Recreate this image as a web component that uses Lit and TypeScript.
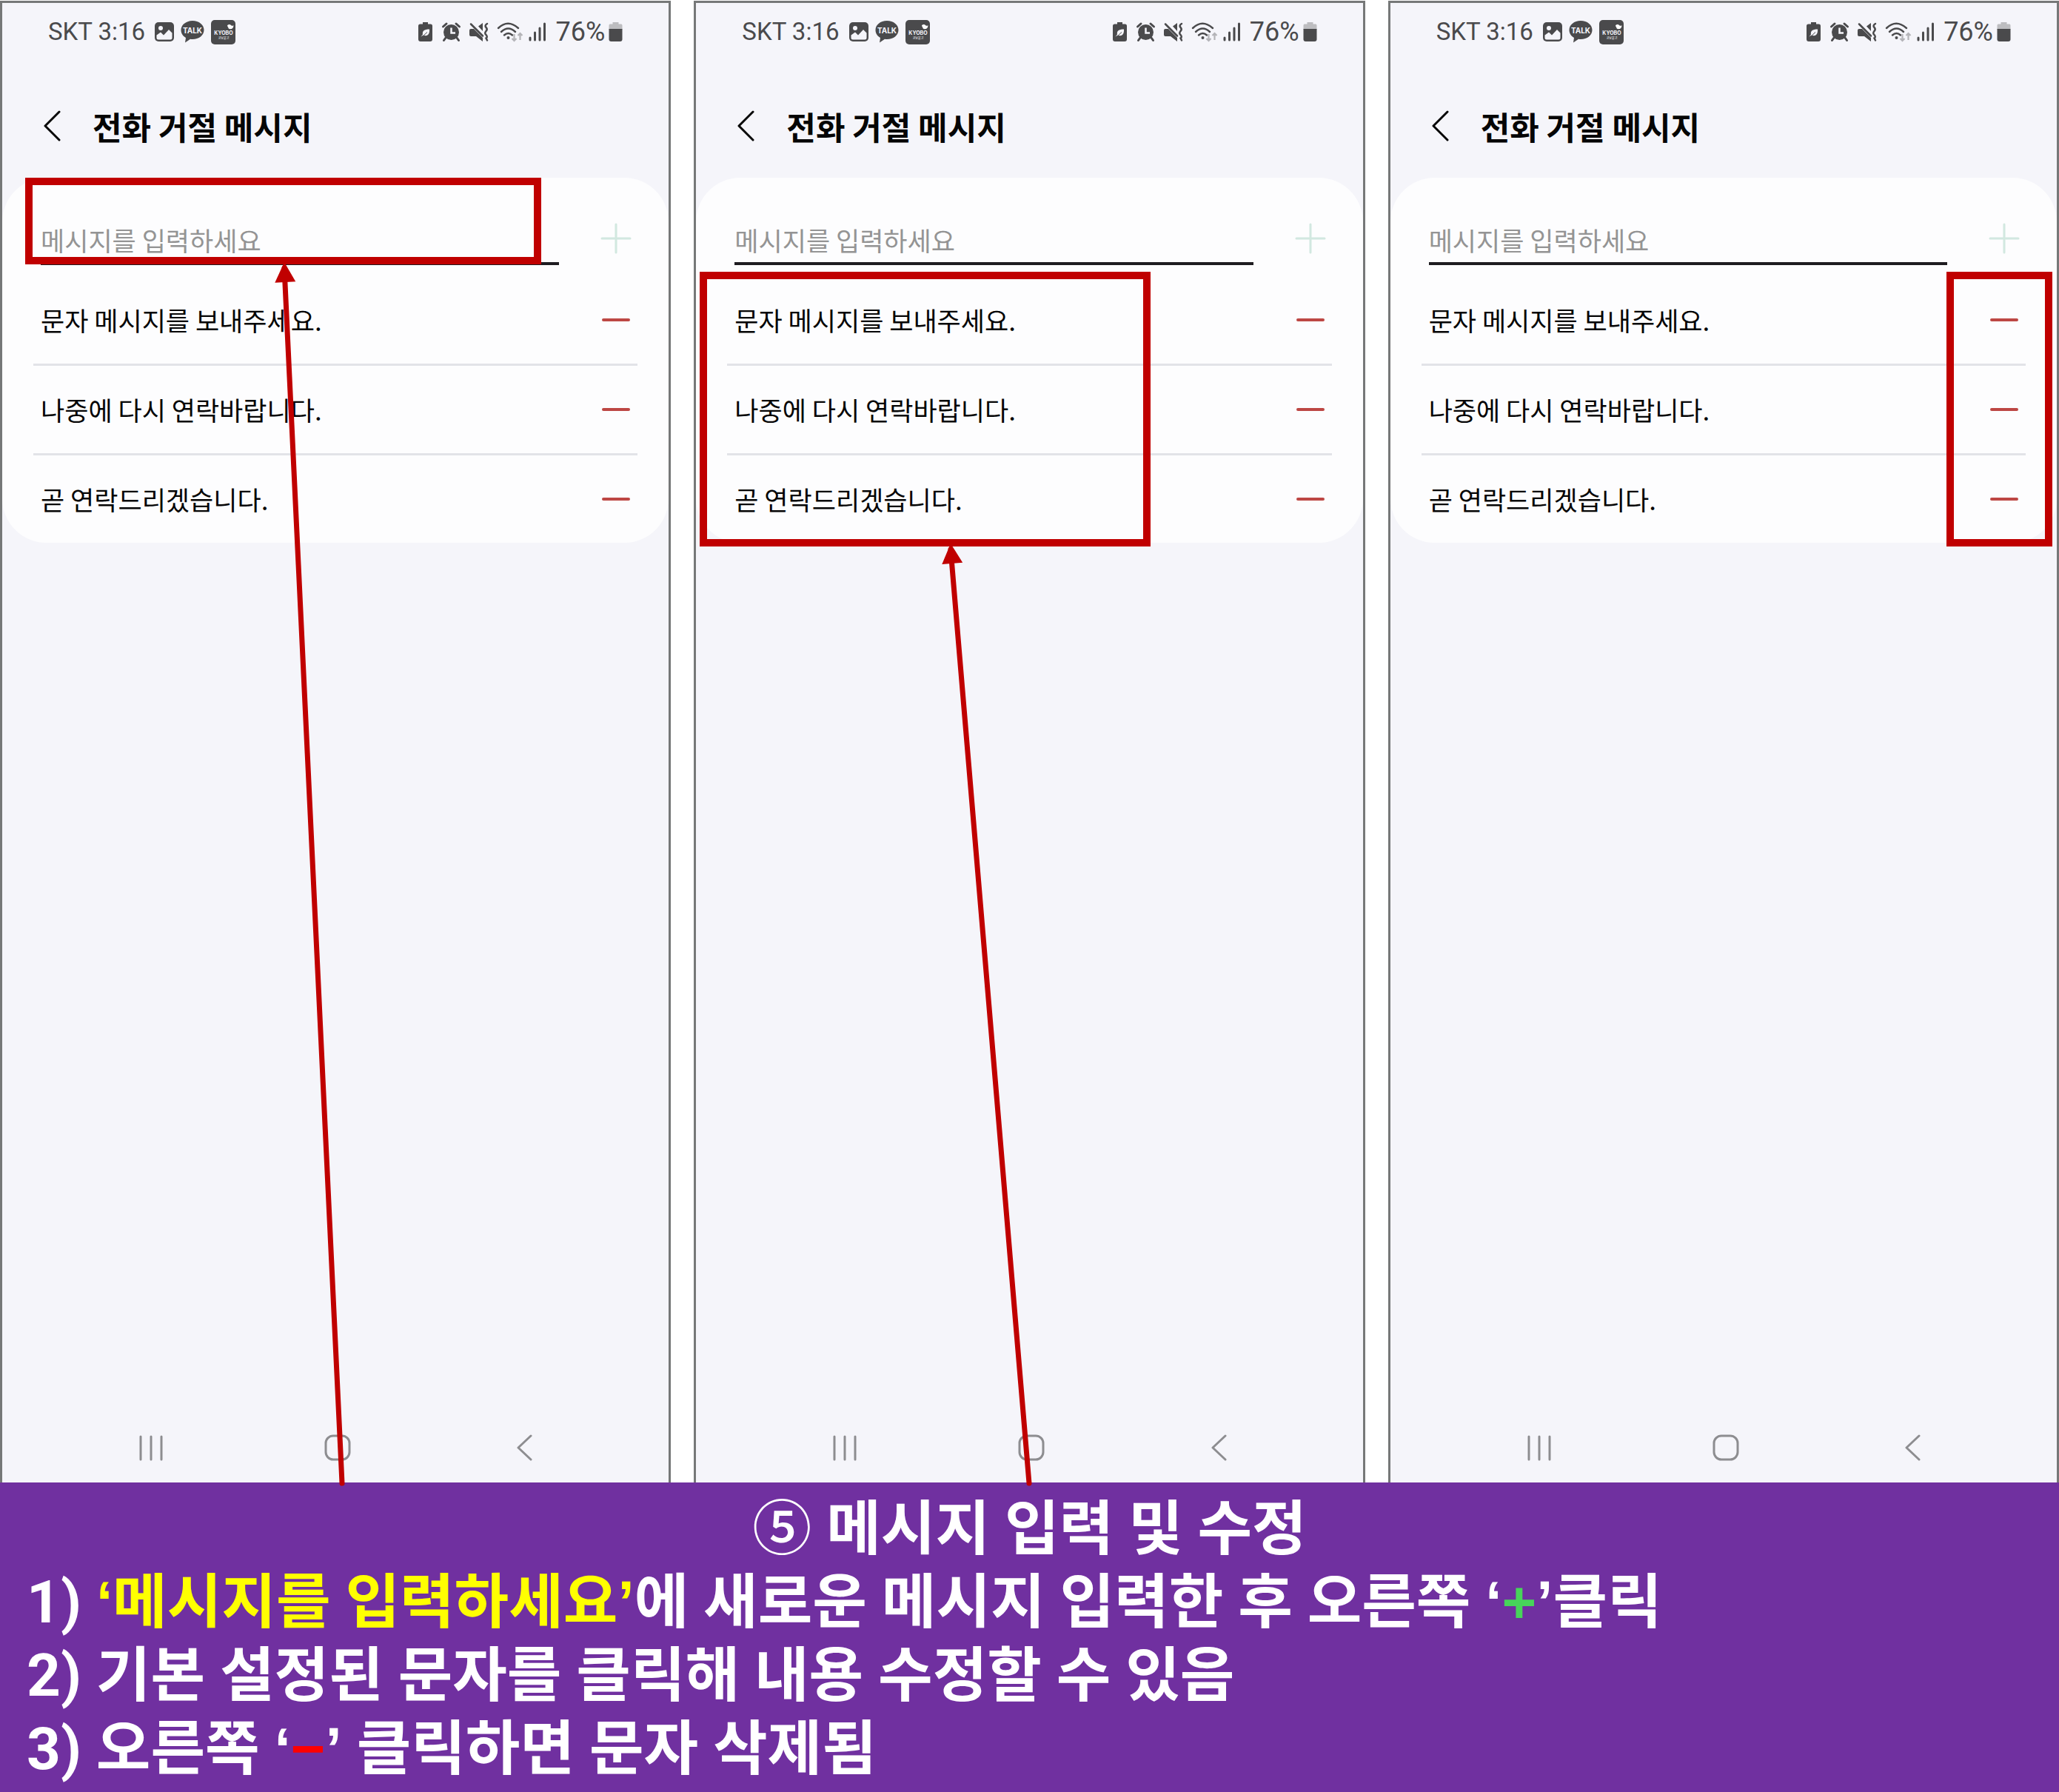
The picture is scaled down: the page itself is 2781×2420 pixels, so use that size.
import { LitElement, html, css, svg } from "lit";
import { customElement, property } from "lit/decorators.js";

const MESSAGES = [
  "문자 메시지를 보내주세요.",
  "나중에 다시 연락바랍니다.",
  "곧 연락드리겠습니다.",
];

type Mark = "input" | "messages" | "remove";

@customElement("status-bar")
class StatusBar extends LitElement {
  static styles = css`
    :host {
      box-sizing: border-box;
      display: flex;
      align-items: center;
      justify-content: space-between;
      height: 59px;
      padding: 19px 62px 0 62px;
      color: #4a4a4c;
      font: 400 33px/40px Roboto, "Noto Sans CJK KR", sans-serif;
    }
    .group {
      display: flex;
      align-items: center;
    }
    svg {
      display: block;
      flex: none;
      overflow: visible;
    }
    .left {
      gap: 9px;
    }
    .right {
      gap: 12px;
    }
    .clock {
      margin-right: 4px;
    }
    .level {
      display: flex;
      align-items: center;
      gap: 5px;
      font-size: 36px;
    }
    .talk {
      font: 700 10px Inter, sans-serif;
    }
    .kyobo {
      font: 700 7px Inter, sans-serif;
    }
    .store {
      font: 500 4px "Noto Sans CJK KR", sans-serif;
    }
  `;

  render() {
    return html`
      <div class="group left">
        <span class="clock">SKT 3:16</span>
        <svg width="26" height="26" viewBox="0 0 26 26" aria-hidden="true">
          <rect width="26" height="26" rx="5" fill="#4a4a4c" />
          <circle cx="8" cy="8" r="3" fill="#f5f5fa" />
          <path d="M2.500 17.500 L8 13.500 L12 17.500 L19 10 L23.500 14.500 V21 Q23.500 23.500 21 23.500 H5 Q2.500 23.500 2.500 21Z" fill="#f5f5fa" />
        </svg>
        <svg width="32" height="30" viewBox="0 0 32 30" aria-hidden="true">
          <path d="M16 0C7.200 0 .5 5.500 .5 12.500c0 4.500 2.500 8.300 6.500 10.500L6 29.500l7-4.800c1 .2 2 .3 3 .3 8.800 0 15.500-5.500 15.500-12.500S24.800 0 16 0Z" fill="#4a4a4c" />
          <text class="talk" x="16" y="17" text-anchor="middle" fill="#f5f5fa">TALK</text>
        </svg>
        <svg width="33" height="33" viewBox="0 0 33 33" aria-hidden="true">
          <rect width="33" height="33" rx="5" fill="#4a4a4c" />
          <path d="M22 8c0-2 3.500-3 5-1 1 1 2 1.200 3.500.3 0 3-1.800 5-4.500 5-1.800 0-2.500-1-2.800-2.300Z" fill="#fff" />
          <text class="kyobo" x="17" y="20" text-anchor="middle" fill="#f5f5fa">KYOBO</text>
          <text class="store" x="17" y="26" text-anchor="middle" fill="#f5f5fa">교보문고</text>
        </svg>
      </div>
      <div class="group right">
        <svg width="20" height="26" viewBox="0 0 20 26" aria-hidden="true">
          <path d="M6 0h7v2.500h3.500q2.500 0 2.500 2.500V23q0 3-3 3H3q-3 0-3-3V5q0-2.500 2.500-2.500H6Z" fill="#4a4a4c" />
          <path d="M3 20l3-3.500C5 12 8 9.500 15 9.500c.5 6-2 10-7.500 8.300Z" fill="#f5f5fa" />
          <path d="M3 20q4-1 9-6.500" fill="none" stroke="#4a4a4c" />
        </svg>
        <svg width="25" height="26" viewBox="0 0 25 26" aria-hidden="true">
          <circle cx="12.500" cy="13.500" r="10.500" fill="#4a4a4c" />
          <path d="M5 21l-2.500 3.500M20 21l2.500 3.500M1.500 6l4.500-4M23.500 6L19 2" stroke="#4a4a4c" stroke-width="3" stroke-linecap="round" />
          <path d="M12.500 7.500v7h5.500" fill="none" stroke="#f5f5fa" stroke-width="2.500" />
        </svg>
        <svg width="26" height="26" viewBox="0 0 26 26" aria-hidden="true">
          <path d="M0 11q0-2 2-2h4l12 12v5l-9-7H2q-2 0-2-2ZM12 5.500L18 1v11Z" fill="#4a4a4c" />
          <path d="M2 2.500L18 18.500" stroke="#4a4a4c" stroke-width="2.500" stroke-linecap="round" />
          <path d="M24 2q-4 2.500-1.500 5 2.500 2.500 0 5-2.500 3 0 5 2.500 3 0 4.500l1.500 3" fill="none" stroke="#4a4a4c" stroke-width="2.500" stroke-linecap="round" />
        </svg>
        <svg width="30" height="27" viewBox="0 0 30 27" aria-hidden="true">
          <g fill="none" stroke="#4a4a4c" stroke-width="2.500" stroke-linecap="round">
            <path d="M1 8q13-12.500 27 0M5 13q9.500-9 19 0M9 17.500q5.500-5 11 0" />
          </g>
          <circle cx="14.500" cy="21" r="2" fill="#4a4a4c" />
          <path d="M22.500 16v9m-3-3l3 3 3-3M30.500 24v-9m-3 3l3-3 3 3" fill="none" stroke="#b4b4b8" stroke-width="2.200" />
        </svg>
        <svg width="24" height="26" viewBox="0 0 24 26" aria-hidden="true">
          <path d="M2 21v3M8.500 14v10M15 8v16M21.500 2v22" stroke="#4a4a4c" stroke-width="3" stroke-linecap="round" />
        </svg>
        <span class="level">
          76%
          <svg width="19" height="26" viewBox="0 0 19 26" aria-hidden="true">
            <path d="M5.500 0h8v2.500H17q1.500 0 1.500 2V10H.5V4.500q0-2 1.500-2h3.500Z" fill="#bdbdc0" />
            <path d="M.5 9h18v14q0 3-3 3h-12q-3 0-3-3Z" fill="#4a4a4c" />
          </svg>
        </span>
      </div>
    `;
  }
}

@customElement("phone-screen")
class PhoneScreen extends LitElement {
  @property() mark: Mark = "input";

  static styles = css`
    :host {
      position: relative;
      display: flex;
      flex-direction: column;
      min-width: 0;
      margin-top: 1px;
      border: 3px solid #767878;
      border-bottom: 0;
      background: #f5f5fa;
      color: #050505;
      font: 400 35px/52px "Noto Sans CJK KR", sans-serif;
    }
    * {
      box-sizing: border-box;
    }
    button {
      display: grid;
      place-items: center;
      padding: 0;
      border: 0;
      background: none;
      color: inherit;
      font: inherit;
    }
    svg {
      display: block;
      fill: none;
      stroke-linecap: round;
      stroke-linejoin: round;
    }
    .head {
      display: flex;
      align-items: center;
      gap: 42px;
      height: 177px;
      padding: 36px 56px 0;
    }
    h1 {
      margin: 0;
      font-size: 43px;
      line-height: 60px;
      font-weight: 700;
    }
    .card {
      padding: 0 42px;
      border-radius: 60px;
      background: #fdfdfe;
    }
    .entry {
      display: flex;
      align-items: flex-end;
      justify-content: space-between;
      gap: 56px;
      height: 130px;
      padding: 0 8px 12px 10px;
    }
    .field {
      flex: 1;
      min-width: 0;
      height: 72px;
      padding: 6px 0 0;
      border: 0;
      border-bottom: 4px solid #1e1c20;
      border-radius: 0;
      outline: 0;
      background: none;
      font: inherit;
    }
    .field::placeholder {
      color: #949494;
      opacity: 1;
    }
    .tool {
      flex: none;
      width: 42px;
      height: 72px;
    }
    ul {
      margin: 0;
      padding: 0;
      list-style: none;
    }
    li {
      display: flex;
      align-items: center;
      justify-content: space-between;
      height: 121px;
      padding: 0 8px 0 10px;
      border-top: 3px solid #e2e3e8;
    }
    li:first-child {
      border-top-color: transparent;
    }
    .nav {
      display: grid;
      grid-template-columns: repeat(3, 1fr);
      margin-top: auto;
      padding: 0 69px 25px 75px;
    }
    .nav button {
      height: 44px;
    }
    .mark {
      position: absolute;
      border: 10px solid #c00000;
      pointer-events: none;
    }
    .mark.input {
      left: 31px;
      right: 172px;
      top: 236px;
      height: 117px;
    }
    .mark.messages {
      left: 5px;
      right: 287px;
      top: 363px;
      height: 371px;
    }
    .mark.remove {
      right: 6px;
      width: 143px;
      top: 363px;
      height: 371px;
    }
  `;

  render() {
    return html`
      <status-bar></status-bar>
      <header class="head">
        <button aria-label="뒤로">
          <svg width="24" height="42" viewBox="0 0 24 42" stroke="#050505" stroke-width="3">
            <path d="M21 2L2 21l19 19" />
          </svg>
        </button>
        <h1>전화 거절 메시지</h1>
      </header>
      <section class="card">
        <div class="entry">
          <input class="field" type="text" aria-label="메시지" placeholder="메시지를 입력하세요" />
          <button class="tool" aria-label="추가">
            <svg width="42" height="42" viewBox="0 0 42 42" stroke="#d2e8e0" stroke-width="3">
              <path d="M2 21h38M21 2v38" />
            </svg>
          </button>
        </div>
        <ul>
          ${MESSAGES.map(
            (text) => html`<li>
              <button>${text}</button>
              <button class="tool" aria-label="삭제">
                <svg width="42" height="6" viewBox="0 0 42 6" stroke="#bd4744" stroke-width="4">
                  <path d="M4 3h34" />
                </svg>
              </button>
            </li>`
          )}
        </ul>
      </section>
      <nav class="nav">
        <button aria-label="최근 앱">
          <svg width="34" height="36" viewBox="0 0 34 36" stroke="#8d8d90" stroke-width="3">
            <path d="M3 3v31M17 3v31M31 3v31" />
          </svg>
        </button>
        <button aria-label="홈">
          <svg width="36" height="36" viewBox="0 0 36 36" stroke="#8d8d90" stroke-width="3">
            <rect x="2" y="2" width="32" height="32" rx="10" />
          </svg>
        </button>
        <button aria-label="이전">
          <svg width="22" height="36" viewBox="0 0 22 36" stroke="#8d8d90" stroke-width="3">
            <path d="M20 2L3 18l17 16" />
          </svg>
        </button>
      </nav>
      <div class="mark ${this.mark}"></div>
    `;
  }
}

const arrow = (x: number, y: number, endX: number) => {
  const angle = (Math.atan2(2003 - y, endX - x) * 180) / Math.PI - 90;
  return svg`
    <line x1=${x} y1=${y + 8} x2=${endX} y2="2003" />
    <path d="M0 0L14 27H-14Z" transform="translate(${x} ${y}) rotate(${angle})" />
  `;
};

@customElement("app-root")
class AppRoot extends LitElement {
  static styles = css`
    :host {
      display: flex;
      flex-direction: column;
      min-height: 100vh;
      background: #fff;
    }
    .stage {
      position: relative;
      flex: 1;
      display: grid;
      grid-template-columns: repeat(3, 1fr);
      gap: 31px;
    }
    .arrows {
      position: absolute;
      inset: 0;
      width: 100%;
      height: 100%;
      overflow: visible;
      pointer-events: none;
      fill: #c00000;
    }
    .arrows line {
      stroke: #c00000;
      stroke-width: 7px;
      stroke-linecap: round;
    }
    .guide {
      padding: 14px 36px 8px;
      background: #7030a0;
      color: #fff;
      font-family: Roboto, "Noto Sans CJK KR", sans-serif;
      font-size: 80px;
      line-height: 99px;
      font-weight: 700;
    }
    h2,
    p {
      margin: 0;
      font: inherit;
    }
    h2 {
      text-align: center;
    }
    .step {
      font-weight: 500;
    }
    .yellow {
      color: #ffff00;
    }
    .quote,
    .green,
    .red {
      font-family: "Liberation Sans", sans-serif;
      line-height: 80px;
    }
    .green {
      color: #47d45a;
    }
    .red {
      color: #ff0000;
    }
  `;

  render() {
    const open = html`<span class="quote">‘</span>`;
    const close = html`<span class="quote">’</span>`;
    return html`
      <main class="stage">
        <phone-screen mark="input"></phone-screen>
        <phone-screen mark="messages"></phone-screen>
        <phone-screen mark="remove"></phone-screen>
        <svg class="arrows" viewBox="0 0 2781 2002" preserveAspectRatio="none" aria-hidden="true">
          ${arrow(384, 354, 462)} ${arrow(1284, 734, 1390)}
        </svg>
      </main>
      <footer class="guide">
        <h2><span class="step">⑤</span> 메시지 입력 및 수정</h2>
        <p>1) <span class="yellow">${open}메시지를 입력하세요${close}</span>에 새로운 메시지 입력한 후 오른쪽 ${open}<span class="green">+</span>${close}클릭</p>
        <p>2) 기본 설정된 문자를 클릭해 내용 수정할 수 있음</p>
        <p>3) 오른쪽 ${open}<span class="red">−</span>${close} 클릭하면 문자 삭제됨</p>
      </footer>
    `;
  }
}
